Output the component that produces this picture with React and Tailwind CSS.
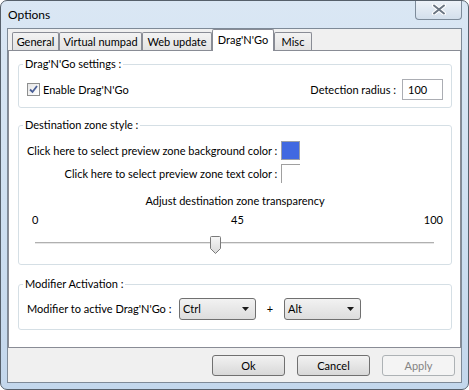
const FONT = "font-['Segoe_UI','Lato',sans-serif]";

function Tab({ label, width, active }) {
  if (active) {
    return (
      <div
        className={`${width} h-[22px] -mb-px relative bg-white border border-b-0 border-[#898c95] rounded-t-[2px] flex justify-center pt-[3px] whitespace-nowrap`}
      >
        {label}
      </div>
    );
  }
  return (
    <div
      className={`${width} h-[18px] border border-b-0 border-[#898c95] rounded-t-[2px] bg-gradient-to-b from-[#f3f3f3] to-[#e3e3e3] flex justify-center pt-[2px] whitespace-nowrap`}
    >
      {label}
    </div>
  );
}

function Group({ title, className, children }) {
  return (
    <fieldset className={`ml-[9px] mr-[8px] border border-[#d5dfe5] rounded-[3px] px-[8px] ${className}`}>
      <legend className="-ml-[4px] px-[2px] whitespace-nowrap">{title}</legend>
      {children}
    </fieldset>
  );
}

function Select({ value }) {
  return (
    <div className="w-[77px] h-[22px] border border-[#707070] rounded-[3px] bg-gradient-to-b from-[#f2f2f2] to-[#dddddd] flex items-center justify-between pl-[3px] pr-[5px]">
      <span>{value}</span>
      <svg width="8" height="5" viewBox="0 0 8 5">
        <path d="M0 0H7L3.5 4Z" fill="#1a1a1a" />
      </svg>
    </div>
  );
}

function Button({ label, disabled }) {
  return (
    <div
      className={
        disabled
          ? "w-[73px] h-[21px] border border-[#adb2b5] rounded-[3px] bg-[#f4f4f4] text-[#838383] flex items-center justify-center"
          : "w-[73px] h-[21px] border border-[#707070] rounded-[3px] bg-gradient-to-b from-[#f2f2f2] to-[#d8d8d8] flex items-center justify-center"
      }
    >
      {label}
    </div>
  );
}

function Slider({ value }) {
  return (
    <div className="relative h-[18px] ml-[8px] mr-[9px]">
      <div className="absolute left-0 right-0 top-[6px] h-[2px] border-t border-[#b0b0b0] border-b border-b-[#e6e6e6]" />
      <svg
        className="absolute top-0"
        style={{ left: `calc(${value}% - 5px)` }}
        width="11"
        height="18"
        viewBox="0 0 11 18"
      >
        <defs>
          <linearGradient id="thumb" x1="0" y1="0" x2="0" y2="1">
            <stop offset="0" stopColor="#f7f7f7" />
            <stop offset="1" stopColor="#d9d9d9" />
          </linearGradient>
        </defs>
        <path d="M1.5 0.5H9.5Q10.5 0.5 10.5 1.5V12.5L5.5 17.5L0.5 12.5V1.5Q0.5 0.5 1.5 0.5Z" fill="url(#thumb)" stroke="#7a7a7a" />
      </svg>
    </div>
  );
}

export default function App() {
  return (
    <div
      className={`${FONT} text-[11px] leading-[14px] text-black w-[469px] h-[390px] overflow-hidden border border-[#56606b] rounded-[7px] bg-gradient-to-b from-[#dae7f4] via-[#cfe0f1] to-[#c3d7ec] px-[6px]`}
    >
      <div className="h-[27px] flex items-start justify-between">
        <span className="pt-[7px] pl-[1px] text-[12px]">Options</span>
        <div className="-mt-px w-[47px] h-[20px] border border-t-0 border-[#7d8b9a] rounded-b-[4px] bg-gradient-to-b from-[#eef3f9] to-[#d3dfec] flex items-center justify-center">
          <svg width="14" height="11" viewBox="0 0 14 11">
            <path d="M2 1.5L12 9.5M12 1.5L2 9.5" stroke="#ffffff" strokeWidth="4" strokeLinecap="round" />
            <path d="M2 1.5L12 9.5M12 1.5L2 9.5" stroke="#6b7683" strokeWidth="2" strokeLinecap="round" />
          </svg>
        </div>
      </div>

      <div className="h-[355px] border border-[#7e8a97] bg-[#f0f0f0]">
        <div className="h-[21px] flex items-end pl-[4px]">
          <Tab label="General" width="w-[47px]" />
          <Tab label="Virtual numpad" width="w-[83px]" />
          <Tab label="Web update" width="w-[70px]" />
          <Tab label="Drag'N'Go" width="w-[62px]" active />
          <Tab label="Misc" width="w-[38px]" />
        </div>

        <div className="h-[298px] bg-white border border-[#898c95] pt-[6px]">
          <Group title="Drag'N'Go settings :" className="pb-[7px]">
            <div className="mt-[8px] h-[21px] flex items-center whitespace-nowrap">
              <div className="w-[13px] h-[13px] border border-[#8e8f8f] bg-gradient-to-br from-[#e6e6e6] to-[#ffffff] flex items-center justify-center">
                <svg width="9" height="9" viewBox="0 0 9 9">
                  <path d="M1 4.5L3.5 7L8 1" fill="none" stroke="#4a5f97" strokeWidth="1.8" />
                </svg>
              </div>
              <span className="ml-[3px]">Enable Drag'N'Go</span>
              <span className="ml-auto">Detection radius :</span>
              <div className="ml-[6px] w-[41px] h-[21px] border border-[#abadb3] flex items-center pl-[5px]">100</div>
            </div>
          </Group>

          <Group title="Destination zone style :" className="mt-[10px] pb-[10px]">
            <div className="mt-[9px] grid grid-cols-[auto_19px] gap-x-[4px] gap-y-[4px] justify-start items-center whitespace-nowrap">
              <span className="text-right">Click here to select preview zone background color :</span>
              <div className="w-[19px] h-[19px] border border-[#9aa0aa] bg-[#4169e1]" />
              <span className="text-right">Click here to select preview zone text color :</span>
              <div className="w-[19px] h-[19px] border-l border-t border-[#a0a0a0] bg-white" />
            </div>
            <div className="mt-[11px] text-center">Adjust destination zone transparency</div>
            <div className="mt-[5px] grid grid-cols-3 pl-[5px]">
              <span>0</span>
              <span className="text-center">45</span>
              <span className="text-right">100</span>
            </div>
            <div className="mt-[9px]">
              <Slider value={45} />
            </div>
          </Group>

          <Group title="Modifier Activation :" className="mt-[12px] pb-[9px]">
            <div className="mt-[7px] flex items-center whitespace-nowrap">
              <span className="w-[152px]">Modifier to active Drag'N'Go :</span>
              <Select value="Ctrl" />
              <span className="w-[28px] text-center">+</span>
              <Select value="Alt" />
            </div>
          </Group>
        </div>

        <div className="mt-[7px] flex justify-end gap-[12px] pr-[6px]">
          <Button label="Ok" />
          <Button label="Cancel" />
          <Button label="Apply" disabled />
        </div>
      </div>
    </div>
  );
}
